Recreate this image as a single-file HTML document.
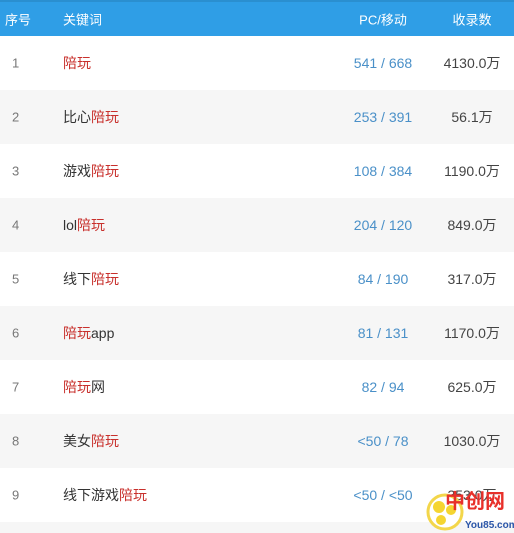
<!DOCTYPE html>
<html><head><meta charset="utf-8"><style>
body{margin:0;width:514px;height:533px;overflow:hidden;background:#f6f6f6;font-family:"Liberation Sans","Noto Sans CJK SC",sans-serif;}
.hd{position:absolute;left:0;top:0;width:514px;height:36px;background:#2f9ee6;border-top:2px solid #2a8fd0;box-sizing:border-box;color:#fff;font-size:13px;}
.hd span,.r span{position:absolute;top:50%;transform:translateY(-50%);white-space:nowrap}
.r{position:absolute;left:0;width:514px;height:54px;font-size:14px;color:#333}
.r:nth-child(odd){background:#fff}
.r:nth-child(even){background:#f6f6f6}
.n{left:12px;color:#777;font-size:13px}
.k{left:63px}
.p{left:383px;transform:translate(-50%,-50%)!important;color:#4a90c8}
.c{left:472px;transform:translate(-50%,-50%)!important;color:#444}
em{font-style:normal;color:#c8302c}
</style></head><body>
<div class="hd"><span style="left:5px">序号</span><span style="left:63px">关键词</span><span style="left:383px;transform:translate(-50%,-50%)">PC/移动</span><span style="left:472px;transform:translate(-50%,-50%)">收录数</span></div>
<div style="position:absolute;top:36px;left:0">
<div class="r" style="top:0"><span class="n">1</span><span class="k"><em>陪玩</em></span><span class="p">541 / 668</span><span class="c">4130.0万</span></div>
<div class="r" style="top:54px"><span class="n">2</span><span class="k">比心<em>陪玩</em></span><span class="p">253 / 391</span><span class="c">56.1万</span></div>
<div class="r" style="top:108px"><span class="n">3</span><span class="k">游戏<em>陪玩</em></span><span class="p">108 / 384</span><span class="c">1190.0万</span></div>
<div class="r" style="top:162px"><span class="n">4</span><span class="k">lol<em>陪玩</em></span><span class="p">204 / 120</span><span class="c">849.0万</span></div>
<div class="r" style="top:216px"><span class="n">5</span><span class="k">线下<em>陪玩</em></span><span class="p">84 / 190</span><span class="c">317.0万</span></div>
<div class="r" style="top:270px"><span class="n">6</span><span class="k"><em>陪玩</em>app</span><span class="p">81 / 131</span><span class="c">1170.0万</span></div>
<div class="r" style="top:324px"><span class="n">7</span><span class="k"><em>陪玩</em>网</span><span class="p">82 / 94</span><span class="c">625.0万</span></div>
<div class="r" style="top:378px"><span class="n">8</span><span class="k">美女<em>陪玩</em></span><span class="p">&lt;50 / 78</span><span class="c">1030.0万</span></div>
<div class="r" style="top:432px"><span class="n">9</span><span class="k">线下游戏<em>陪玩</em></span><span class="p">&lt;50 / &lt;50</span><span class="c">353.0万</span></div>
</div>
<svg style="position:absolute;left:425px;top:488px" width="89" height="45">
<circle cx="20" cy="24" r="17" fill="#fff" stroke="#f3d64a" stroke-width="3"/>
<circle cx="14" cy="19" r="6" fill="#f5d530"/><circle cx="26" cy="22" r="5" fill="#f5d530"/><circle cx="16" cy="32" r="5" fill="#f5d530"/>
<text x="20" y="20" font-family="Noto Sans CJK SC,sans-serif" font-size="20" font-weight="bold" fill="#e8302a">中创网</text>
<text x="40" y="40" font-family="Liberation Sans,sans-serif" font-size="10" font-weight="bold" fill="#2a55a8">You85.com</text>
</svg>
</body></html>
